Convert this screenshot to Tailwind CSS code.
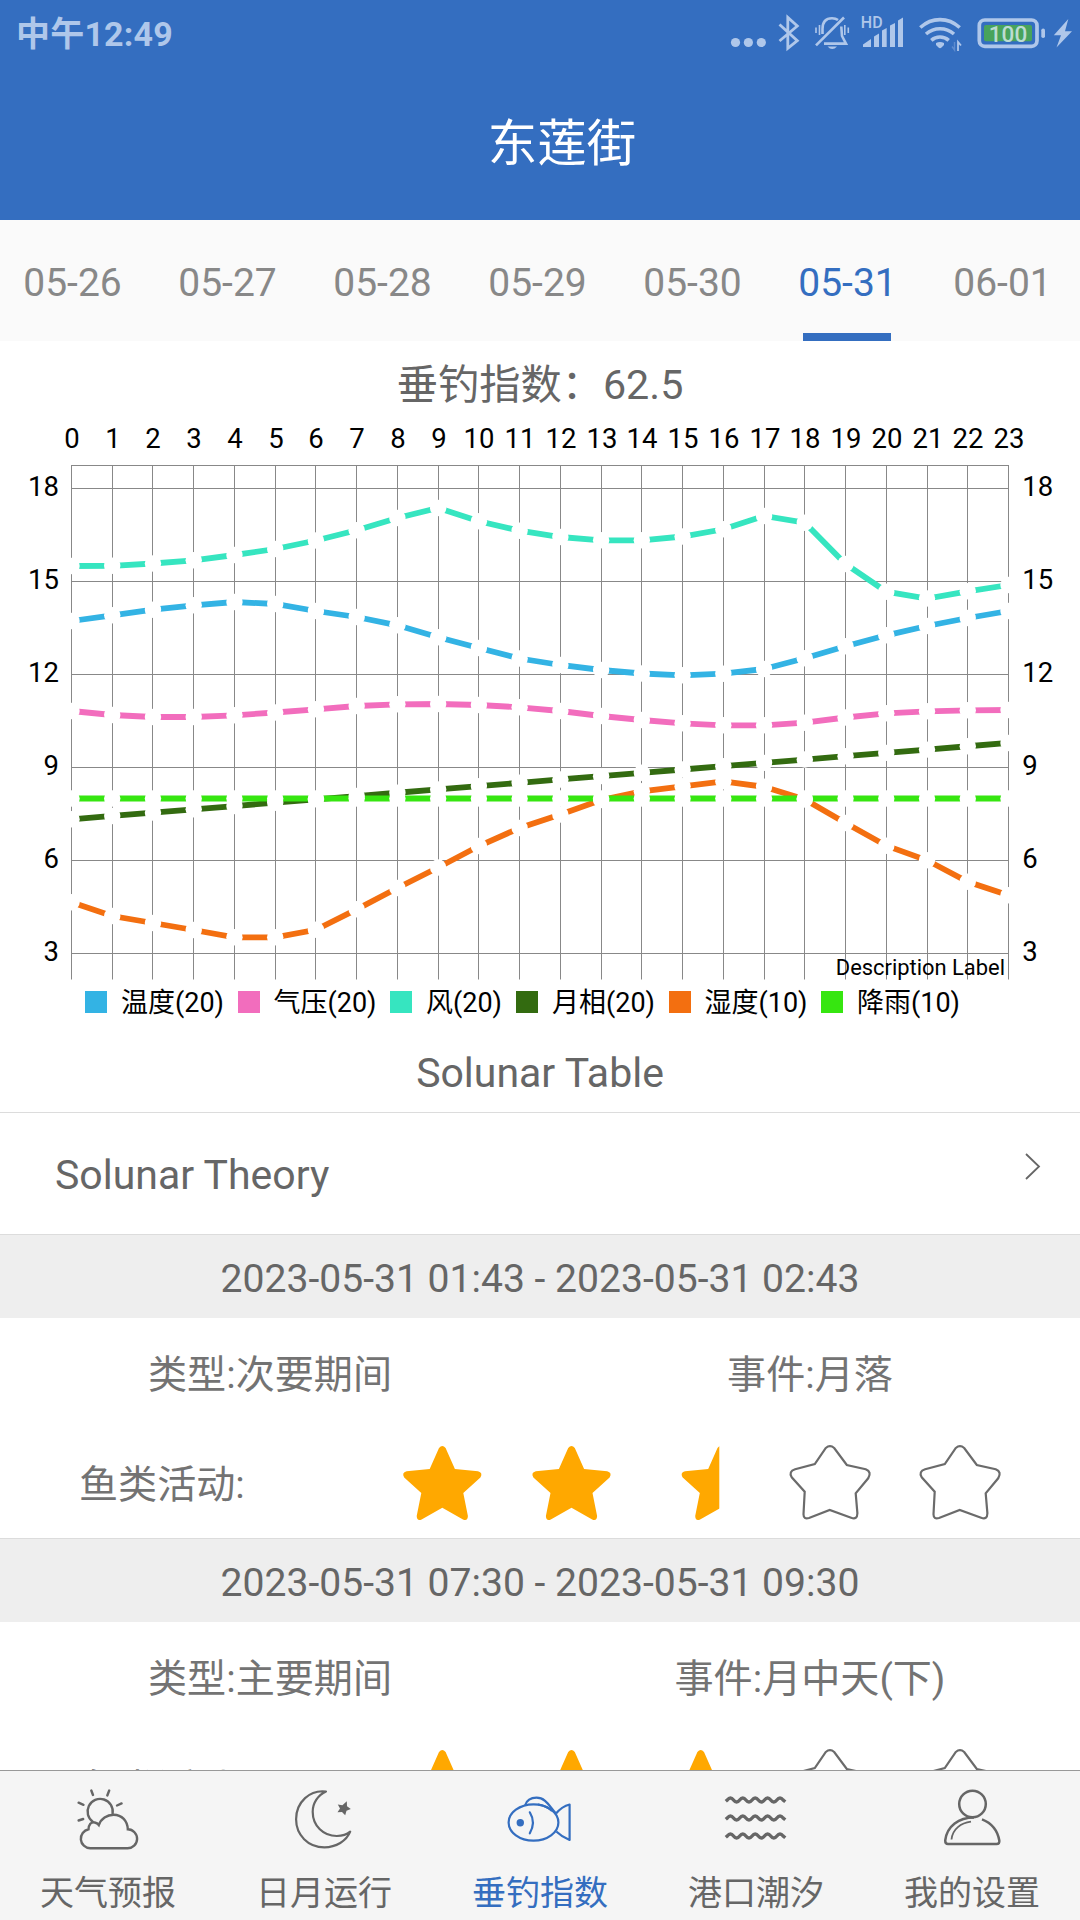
<!DOCTYPE html>
<html lang="zh-CN">
<head>
  <meta charset="UTF-8" />
  <meta name="viewport" content="width=device-width, initial-scale=1.0" />
  <title>垂钓指数</title>
  <script src="https://cdn.jsdelivr.net/npm/@tailwindcss/browser@4"></script>
</head>
<body class="bg-white">

<!-- Shared shapes -->
<svg width="0" height="0" class="absolute">
  <defs>
    <path id="star-full" d="M37 3 Q40.3 -1.2 43.6 3 L52.9 24 L76 26.3 Q81.3 27.6 78.4 32.5 L61.3 48 L65.9 71 Q65.7 76.5 61 74.5 L40.3 62.7 L19.6 74.5 Q14.9 76.5 14.7 71 L19.3 48 L2.2 32.5 Q-0.7 27.6 4.6 26.3 L27.7 24 Z" fill="#ffa800" />
    <path id="star-empty" d="M36.1 3 Q40.3 -0.6 44.5 3 L57.1 20 L76 24.3 Q82.4 27 78.5 33.3 L66 48.3 L67.7 68.3 Q67.6 75 61.4 72.7 L40 65 L19.3 73 Q13.8 74.5 13.8 69.3 L15 46.7 L2 32.3 Q-1.4 26.5 5.4 24.3 L25.1 19 Z" fill="none" stroke="#6b6b6b" stroke-width="2.2" />
    <clipPath id="left-half"><rect x="0" y="-2" width="38.8" height="82" /></clipPath>
  </defs>
</svg>

<div class="w-[1080px] h-[1920px] flex flex-col overflow-hidden bg-white text-[#666] font-['Roboto','Noto_Sans_CJK_SC',sans-serif]">

  <!-- Header -->
  <header class="h-[220px] shrink-0 bg-[#346ec0] flex flex-col">
    <div class="h-[66px] flex items-center justify-between pl-4 text-[#afc7ea]">
      <span class="text-[34px] leading-[66px] pt-0.5 font-bold tracking-[0.2px]">中午12:49</span>
      <svg width="380" height="66" viewBox="0 0 380 66" fill="none" stroke="currentColor">
        <g fill="currentColor" stroke="none">
          <circle cx="35.5" cy="42.5" r="4.6" />
          <circle cx="48.4" cy="42.5" r="4.6" />
          <circle cx="61.3" cy="42.5" r="4.6" />
        </g>
        <!-- bluetooth -->
        <path d="M79.5 24.5 L97.3 40.7 L87.8 48.3 V17.5 L97.3 26 L79.5 41" stroke-width="2.8" />
        <!-- muted bell -->
        <path d="M116 45.3 L144 17.5" stroke-width="2.6" />
        <path d="M122.5 34 V29 C122.5 22 126 18.2 132 18.2 C134.5 18.2 136.5 18.8 138 20 M141.3 26.5 L142 36 L146 43.6 H124" stroke-width="2.6" />
        <path d="M127.5 46.5 H137 Q132.3 51.5 127.5 46.5Z" fill="currentColor" stroke="none" />
        <path d="M116 27.5 V33 M119.5 25 V35 M144.8 25 V35 M148.3 27.5 V33" stroke-width="1.6" />
        <!-- signal -->
        <text x="160.8" y="28.2" font-size="16" font-weight="500" fill="currentColor" stroke="none">HD</text>
        <path d="M163 47 V44.5 L171 39 V47Z M174 47 V36.5 L179 33.5 V47Z M182 47 V30.5 L186.7 28 V47Z M190 47 V25.5 L195 23 V47Z M198 47 V20.5 L203 17.5 V47Z" fill="currentColor" stroke="none" />
        <!-- wifi -->
        <path d="M220.3 27.5 Q229 19.6 240 19.6 Q251 19.6 259.7 27.5 M226 34 Q232 28.8 240 28.8 Q248 28.8 254 34 M231.3 40.3 Q235 37 240 37 Q245 37 248.7 40.3" stroke-width="3.6" />
        <path d="M236 43 Q240 41 244 43 V45 L241.5 47.6 Q240 48.8 238.5 47.6 L236 45Z" fill="currentColor" stroke="none" />
        <path d="M254.5 42 V50 L252 46.5" stroke-width="1.4" opacity="0.35" />
        <path d="M258 51 V42 L261 45.5" stroke-width="1.8" />
        <!-- battery -->
        <rect x="279.3" y="20" width="57.7" height="26.3" rx="5.5" stroke-width="3.7" />
        <rect x="284" y="25" width="48" height="16.3" rx="2" fill="#48a35c" stroke="none" />
        <text x="308" y="41.5" font-size="22.5" font-weight="500" text-anchor="middle" fill="#bcdcd2" stroke="none">100</text>
        <rect x="341.3" y="28.5" width="3.7" height="9.5" rx="1.8" fill="currentColor" stroke="none" />
        <path d="M368.3 19 L353.8 35.3 H361 L356.5 47.5 L372 31.3 H365Z" fill="currentColor" stroke="none" />
      </svg>
    </div>
    <h1 class="pl-[44px] h-[154px] text-center text-[49.5px] leading-[157px] text-white">东莲街</h1>
  </header>

  <!-- Date tabs -->
  <nav class="h-[121px] shrink-0 bg-[#fafafa] overflow-hidden">
    <div class="flex w-[1085px] -ml-[5px] text-[39px] leading-[126px] text-[#888] text-center">
      <span class="w-[155px] shrink-0">05-26</span>
      <span class="w-[155px] shrink-0">05-27</span>
      <span class="w-[155px] shrink-0">05-28</span>
      <span class="w-[155px] shrink-0">05-29</span>
      <span class="w-[155px] shrink-0">05-30</span>
      <span class="w-[155px] h-[121px] shrink-0 relative text-[#346ec0]">05-31
        <i class="absolute bottom-0 left-[33px] w-[88px] h-2 bg-[#346ec0]"></i>
      </span>
      <span class="w-[155px] shrink-0">06-01</span>
    </div>
  </nav>

  <main class="h-[1429px] shrink-0 overflow-hidden">
    <h2 class="h-[79px] text-center text-[41.25px] leading-[89px]">垂钓指数：62.5</h2>

    <!-- Chart: plot area spans x 71.5-1008.5, 31px per unit -->
    <svg id="chart" class="block" width="1080" height="564" viewBox="0 420 1080 564" fill="none" font-size="27.5"></svg>

    <!-- Legend -->
    <div class="h-9 flex items-center pl-[85px] text-black text-[27px] leading-9">
      <div class="flex items-center w-[152.5px]"><i class="w-[22px] h-[22px] mr-3.5 bg-[#33b3e4]"></i><span class="pt-0.5">温度(20)</span></div>
      <div class="flex items-center w-[152.5px]"><i class="w-[22px] h-[22px] mr-3.5 bg-[#f26dbd]"></i><span class="pt-0.5">气压(20)</span></div>
      <div class="flex items-center w-[126px]"><i class="w-[22px] h-[22px] mr-3.5 bg-[#36e5c0]"></i><span class="pt-0.5">风(20)</span></div>
      <div class="flex items-center w-[152.5px]"><i class="w-[22px] h-[22px] mr-3.5 bg-[#336b10]"></i><span class="pt-0.5">月相(20)</span></div>
      <div class="flex items-center w-[152.5px]"><i class="w-[22px] h-[22px] mr-3.5 bg-[#f36f10]"></i><span class="pt-0.5">湿度(10)</span></div>
      <div class="flex items-center"><i class="w-[22px] h-[22px] mr-3.5 bg-[#36e610]"></i><span class="pt-0.5">降雨(10)</span></div>
    </div>

    <h2 class="h-[92px] text-center text-[41px] leading-[106px]">Solunar Table</h2>

    <div class="h-[123px] border-y border-[#dcdcdc] flex justify-between pl-[55px] pr-[38px]">
      <span class="text-[41px] leading-[124px]">Solunar Theory</span>
      <svg class="mt-[39px]" width="18" height="30" viewBox="0 0 18 30" fill="none" stroke="#666" stroke-width="1.8"><path d="M2 2 L15 14.5 L2 27" /></svg>
    </div>

    <!-- Periods -->
    <section class="h-[303px] text-[39.1px]">
      <div class="h-[83px] bg-[#eee] text-center leading-[88px]">2023-05-31 01:43 - 2023-05-31 02:43</div>
      <div class="grid grid-cols-2 h-28 text-center leading-[114px] text-[#737373]">
        <span>类型:次要期间</span>
        <span>事件:月落</span>
      </div>
      <div class="flex h-[108px] pl-[79px] text-[#737373]">
        <span class="w-[323px] leading-[110px]">鱼类活动:</span>
        <svg class="mt-[15px] overflow-visible" width="620" height="78">
          <use href="#star-full" />
          <use href="#star-full" x="129.2" />
          <g transform="translate(278.5 0)"><use href="#star-full" clip-path="url(#left-half)" /></g>
          <use href="#star-empty" x="387.7" />
          <use href="#star-empty" x="517.7" />
        </svg>
      </div>
    </section>

    <section class="h-[304px] text-[39.1px]">
      <div class="h-[84px] bg-[#eee] border-t border-[#dcdcdc] text-center leading-[88px]">2023-05-31 07:30 - 2023-05-31 09:30</div>
      <div class="grid grid-cols-2 h-28 text-center leading-[114px] text-[#737373]">
        <span>类型:主要期间</span>
        <span>事件:月中天(下)</span>
      </div>
      <div class="flex h-[108px] pl-[79px] text-[#737373]">
        <span class="w-[323px] leading-[110px]">鱼类活动:</span>
        <svg class="mt-[15px] overflow-visible" width="620" height="78">
          <use href="#star-full" />
          <use href="#star-full" x="129.2" />
          <use href="#star-full" x="258.4" />
          <use href="#star-empty" x="387.7" />
          <use href="#star-empty" x="517.7" />
        </svg>
      </div>
    </section>
  </main>

  <!-- Bottom navigation -->
  <footer class="h-[150px] shrink-0 bg-[#f5f5f5] border-t border-[#999] grid grid-cols-5 text-[34px] leading-[50px]">
    <div class="flex flex-col items-center pt-[17px]">
      <svg width="64" height="64" viewBox="0 0 64 64" fill="none" stroke="currentColor" stroke-width="2.4" stroke-linecap="round">
        <path d="M15.3 2.5 L17 7 M33.2 2.5 L31.3 7.5 M2.6 14.7 L7.5 16.8 M45.6 15.4 L41 17.5 M2.6 32.5 L7.2 31" />
        <path d="M36.6 25.5 A12.6 12.6 0 1 0 17 33.9" />
        <path d="M22.8 37 C21 34.5 16.5 33.3 14.3 35.8 Q12.6 38 12.5 41.3 A9.6 9.6 0 0 0 14.2 60.3 H51.4 A9.5 9.5 0 0 0 51.8 41.3 C51.5 33 46 26.7 37.6 26.7 C31 26.7 25 30.5 22.8 37Z" />
      </svg>
      <span class="mt-4">天气预报</span>
    </div>
    <div class="flex flex-col items-center pt-[17px]">
      <svg class="-ml-1" width="64" height="64" viewBox="0 0 64 64" fill="none" stroke="currentColor" stroke-width="2.2" stroke-linejoin="round">
        <path d="M36 3.5 C20 1.5 6.1 14 6.1 31.3 C6.1 47 18 59.3 34.4 59.3 C46 59.3 56.5 53 60.2 43.7 C57 46.5 52 48 46.8 48 C33 48 22.7 37.5 22.7 23.7 C22.7 15 28 7 36 3.5Z" />
        <path d="M56.8 13.3 L57 18.3 L60.8 21 L56.5 22.8 L55.2 27.2 L52 24 L47.5 24.3 L50 20.6 L47.8 16.6 L52.4 17.3Z" fill="currentColor" stroke="none" />
      </svg>
      <span class="mt-4">日月运行</span>
    </div>
    <div class="flex flex-col items-center pt-[17px] text-[#346ec0]">
      <svg width="68" height="64" viewBox="0 0 68 64" fill="none" stroke="currentColor" stroke-width="2.2" stroke-linejoin="round">
        <ellipse cx="27.5" cy="34.5" rx="24.9" ry="18.2" />
        <path d="M19 17.5 Q21.5 9.7 30.5 9.7 C39.5 9.7 43 17.5 49.5 25 M50 25.5 Q56 18.5 63.6 16.5 V52 Q56 49 50.3 43.5 M32 16.5 Q40 17.5 46 23" />
        <path d="M23.8 24.3 Q30 34.5 23.8 45.3" stroke-linecap="round" />
        <circle cx="14.3" cy="34.7" r="3.7" fill="currentColor" stroke="none" />
      </svg>
      <span class="mt-4">垂钓指数</span>
    </div>
    <div class="flex flex-col items-center pt-[17px]">
      <svg width="64" height="64" viewBox="0 0 64 64" fill="none" stroke="currentColor" stroke-width="3.4">
        <path id="wave" d="M1.8 13.3 L3.3 12 q3.1 -4 6.2 0 t6.2 0 t6.2 0 t6.2 0 t6.2 0 t6.2 0 t6.2 0 t6.2 0 t6.2 0 L61.3 13.8" />
        <use href="#wave" y="18" />
        <use href="#wave" y="36" />
      </svg>
      <span class="mt-4">港口潮汐</span>
    </div>
    <div class="flex flex-col items-center pt-[17px]">
      <svg width="64" height="64" viewBox="0 0 64 64" fill="none" stroke="currentColor" stroke-width="2.5">
        <circle cx="32.5" cy="16" r="13.3" />
        <path d="M34 29.5 C19 29.5 7 38 5.2 52.5 Q5.2 56 8 56 H56.6 Q59.8 56 59.3 52.5 C57.5 42 51.5 35 42 31.3" />
        <path d="M31 33.7 C21 35 12.5 41 11.5 51.5" stroke-width="1.8" />
      </svg>
      <span class="mt-4">我的设置</span>
    </div>
  </footer>
</div>

<script>
  var X0 = 71.5, STEP = 937 / 23;
  var series = [
    { color: '#33b3e4', y: [621, 615.3, 609.7, 605.3, 602, 604, 611, 617, 625.3, 637.3, 648, 658.5, 665, 670, 673.5, 675.3, 673.7, 669, 658.3, 646.3, 635.3, 626, 618, 611] },
    { color: '#f26dbd', y: [711, 715, 717, 717, 715.3, 712.5, 709.3, 706, 704.3, 704, 705, 707.3, 711, 716, 720, 723.3, 725.3, 725.3, 722.7, 717.5, 713.3, 711.3, 710.3, 710] },
    { color: '#36e5c0', y: [566, 565.8, 563.5, 560.3, 555, 549, 540.5, 530.2, 518, 508, 521.3, 530.7, 537, 540.3, 540.3, 536.5, 529.3, 516, 522.7, 564, 591.7, 598.5, 591.3, 585] },
    { color: '#336b10', y: [] },
    { color: '#f36f10', y: [902.3, 916, 923, 930, 937.3, 937.3, 929.8, 909.3, 888, 867.5, 846, 828, 814.5, 800, 791.3, 786.3, 781.3, 786.8, 799.5, 823, 845.7, 860.3, 881.7, 895.3] },
    { color: '#36e610', y: [] }
  ];
  for (var n = 0; n < 24; n++) {
    series[3].y.push(819.3 - n * 3.32);
    series[5].y.push(798.5);
  }

  var out = '';

  // grid and axis labels
  for (var i = 0; i < 24; i++) {
    var gx = Math.floor(X0 + i * STEP) + 0.5;
    out += '<path d="M' + gx + ' 465V979.5" stroke="#888"/>';
    out += '<text x="' + (gx + 0.4) + '" y="447.7" text-anchor="middle" fill="#000">' + i + '</text>';
  }
  out += '<path d="M71 465.5H1009" stroke="#888"/>';
  for (var v = 18; v >= 3; v -= 3) {
    var gy = 488.5 + (18 - v) * 31;
    out += '<path d="M71 ' + gy + 'H1009" stroke="#888"/>';
    out += '<text x="59" y="' + (gy + 7.4) + '" text-anchor="end" fill="#000">' + v + '</text>';
    out += '<text x="1022.2" y="' + (gy + 7.4) + '" fill="#000">' + v + '</text>';
  }

  // lines first, then the white gaps over every point
  series.forEach(function (s) {
    var pts = s.y.map(function (y, k) { return (X0 + k * STEP) + ',' + y; });
    out += '<polyline points="' + pts.join(' ') + '" stroke="' + s.color + '" stroke-width="5.8"/>';
  });
  series.forEach(function (s) {
    s.y.forEach(function (y, k) {
      out += '<circle cx="' + (X0 + k * STEP) + '" cy="' + y + '" r="8.2" fill="#fff"/>';
    });
  });

  out += '<text x="1005" y="975" font-size="21.9" text-anchor="end" fill="#000">Description Label</text>';
  document.getElementById('chart').innerHTML = out;
</script>
</body>
</html>
